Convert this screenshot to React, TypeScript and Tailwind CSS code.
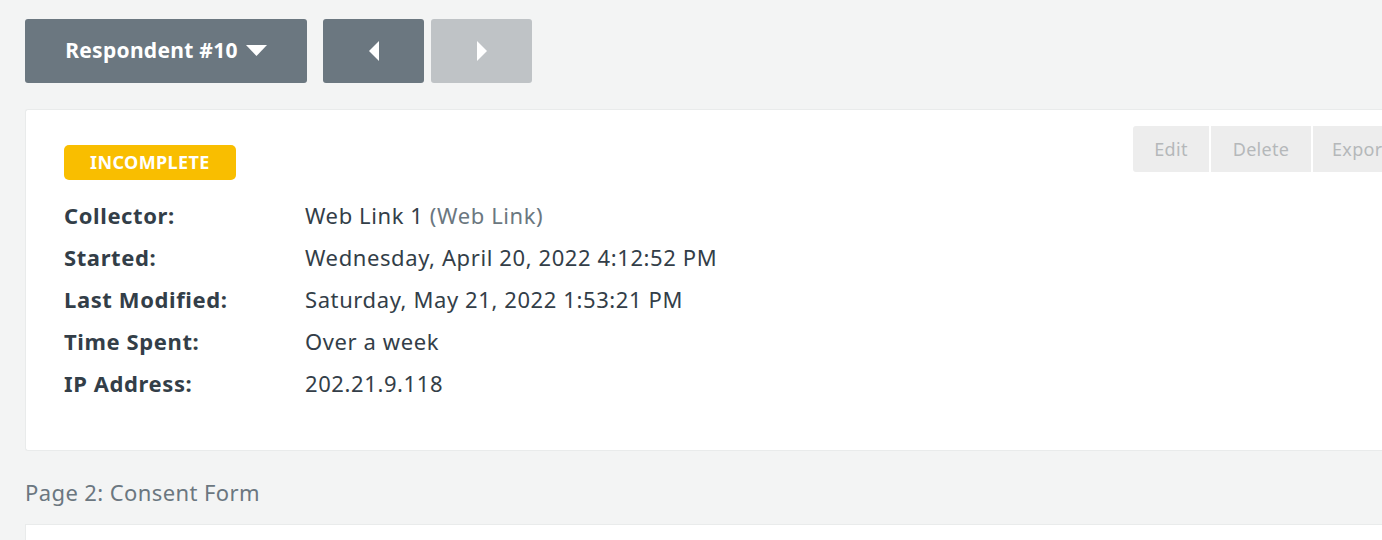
import { useState } from "react";

const rows = [
  { label: "Collector:", value: "Web Link 1", extra: "(Web Link)" },
  { label: "Started:", value: "Wednesday, April 20, 2022 4:12:52 PM" },
  { label: "Last Modified:", value: "Saturday, May 21, 2022 1:53:21 PM" },
  { label: "Time Spent:", value: "Over a week" },
  { label: "IP Address:", value: "202.21.9.118" },
];

export default function App() {
  const [respondent] = useState(10);

  return (
    <div
      className="bg-[#f3f4f4] min-h-screen h-[540px] overflow-hidden pl-[25px] pt-[19px]"
      style={{ fontFamily: '"Noto Sans", "Open Sans", sans-serif' }}
    >
      <div className="flex items-center">
        <button
          type="button"
          className="w-[282px] h-[64px] bg-[#6b7780] rounded-[3px] text-white font-bold text-[21px] tracking-[0.3px] flex items-center justify-center gap-2"
        >
          Respondent #{respondent}
          <svg width="21" height="12" viewBox="0 0 21 12">
            <path d="M0 0h21L10.5 11z" fill="#fff" />
          </svg>
        </button>
        <button
          type="button"
          className="ml-4 w-[101px] h-[64px] bg-[#6b7780] rounded-[3px] flex items-center justify-center"
        >
          <svg width="10" height="20" viewBox="0 0 10 20">
            <path d="M10 0v20L0 10z" fill="#fff" />
          </svg>
        </button>
        <button
          type="button"
          className="ml-[7px] w-[101px] h-[64px] bg-[#bfc3c6] rounded-[3px] flex items-center justify-center"
        >
          <svg width="10" height="20" viewBox="0 0 10 20">
            <path d="M0 0v20L10 10z" fill="#fff" />
          </svg>
        </button>
      </div>

      <div className="mt-[26px] bg-white border border-[#e9ebeb] rounded-l-[3px] border-r-0 h-[342px] pl-[38px] pt-[35px] relative">
        <div className="absolute top-[16px] right-0 flex gap-[2px] text-[18px] text-[#b5b8ba] tracking-[0.3px]">
          <div className="h-[46px] w-[76px] bg-[#ededed] rounded-l-[3px] flex items-center justify-center">
            Edit
          </div>
          <div className="h-[46px] w-[100px] bg-[#ededed] flex items-center justify-center">
            Delete
          </div>
          <div className="h-[46px] w-[69px] bg-[#ededed] pl-[19px] overflow-hidden">
            <span className="block w-[80px] leading-[46px]">Export</span>
          </div>
        </div>

        <span className="inline-flex items-center h-[35px] px-[26px] bg-[#f9be00] rounded-[5px] text-white font-bold text-[18px] tracking-[0.4px]">
          INCOMPLETE
        </span>

        <div className="mt-[14px] flex flex-col">
          {rows.map((r) => (
            <div
              key={r.label}
              className="flex items-center h-[42px] text-[22px] tracking-[0.6px] text-[#333e48]"
            >
              <span className="w-[241px] font-bold">{r.label}</span>
              <span>
                {r.value}
                {r.extra && <span className="text-[#6b7780]"> {r.extra}</span>}
              </span>
            </div>
          ))}
        </div>
      </div>

      <div className="mt-[30px] text-[22px] tracking-[0.4px] text-[#6b7780] leading-none">
        Page 2: Consent Form
      </div>
      <div className="mt-[21px] bg-white border border-[#e9ebeb] border-r-0 h-[40px]" />
    </div>
  );
}
